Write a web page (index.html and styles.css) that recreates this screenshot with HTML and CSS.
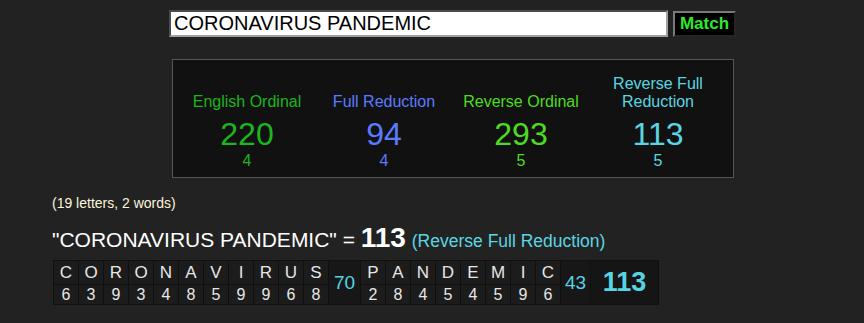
FILE: index.html
```html
<!DOCTYPE html>
<html lang="en">

<head>
    <meta charset="UTF-8">
    <meta name="viewport" content="width=device-width, initial-scale=1.0">
    <title>Gematria Calculator</title>
    <link rel="stylesheet" href="styles.css">
</head>

<body>
    <div class="top">
        <!-- Search bar -->
        <div class="search">
            <input class="query" type="text" value="CORONAVIRUS PANDEMIC">
            <button class="match-btn">Match</button>
        </div>

        <!-- Cipher summary -->
        <div class="ciphers">
            <div class="cipher english">
                <div class="cipher-name">English Ordinal</div>
                <div class="cipher-value">220</div>
                <div class="cipher-words">4</div>
            </div>
            <div class="cipher full">
                <div class="cipher-name">Full Reduction</div>
                <div class="cipher-value">94</div>
                <div class="cipher-words">4</div>
            </div>
            <div class="cipher reverse">
                <div class="cipher-name">Reverse Ordinal</div>
                <div class="cipher-value">293</div>
                <div class="cipher-words">5</div>
            </div>
            <div class="cipher reverse-full">
                <div class="cipher-name">Reverse Full Reduction</div>
                <div class="cipher-value">113</div>
                <div class="cipher-words">5</div>
            </div>
        </div>
    </div>

    <div class="count-note">(19 letters, 2 words)</div>

    <div class="equation">
        "CORONAVIRUS PANDEMIC" = <span class="equation-value">113</span> <span class="equation-cipher">(Reverse Full Reduction)</span>
    </div>

    <!-- Letter breakdown -->
    <div class="breakdown">
        <div class="letter">C</div><div class="num">6</div>
        <div class="letter">O</div><div class="num">3</div>
        <div class="letter">R</div><div class="num">9</div>
        <div class="letter">O</div><div class="num">3</div>
        <div class="letter">N</div><div class="num">4</div>
        <div class="letter">A</div><div class="num">8</div>
        <div class="letter">V</div><div class="num">5</div>
        <div class="letter">I</div><div class="num">9</div>
        <div class="letter">R</div><div class="num">9</div>
        <div class="letter">U</div><div class="num">6</div>
        <div class="letter">S</div><div class="num">8</div>
        <div class="word-total">70</div>
        <div class="letter">P</div><div class="num">2</div>
        <div class="letter">A</div><div class="num">8</div>
        <div class="letter">N</div><div class="num">4</div>
        <div class="letter">D</div><div class="num">5</div>
        <div class="letter">E</div><div class="num">4</div>
        <div class="letter">M</div><div class="num">5</div>
        <div class="letter">I</div><div class="num">9</div>
        <div class="letter">C</div><div class="num">6</div>
        <div class="word-total">43</div>
        <div class="grand-total">113</div>
    </div>
</body>

</html>
```

FILE: styles.css
```css
html,
body {
    overflow: hidden;
}

body {
    margin: 0;
    background: #222;
    font-family: "Liberation Sans", Arial, sans-serif;
    color: #eee;
}

.top {
    width: 905px;
    display: flex;
    flex-direction: column;
    align-items: center;
}

.search {
    display: flex;
    align-items: flex-start;
    gap: 5px;
    margin-top: 10px;
}

.query {
    width: 499px;
    height: 27px;
    box-sizing: border-box;
    border: 2px inset #a0a0a0;
    padding: 0 3px;
    background: #fff;
    color: #000;
    font-family: "Liberation Sans", Arial, sans-serif;
    font-size: 20px;
}

.match-btn {
    margin-top: 1px;
    width: 63px;
    height: 26px;
    box-sizing: border-box;
    padding: 0;
    border: 2px outset #7a7a7a;
    background: #000;
    color: #2ee82e;
    font-family: "Liberation Sans", Arial, sans-serif;
    font-size: 17px;
    font-weight: bold;
}

/* Cipher summary box */
.ciphers {
    margin-top: 22px;
    width: 562px;
    box-sizing: border-box;
    padding: 15px 6px 7px;
    border: 1px solid #555;
    background: #111;
    display: grid;
    grid-template-columns: repeat(4, 137px);
}

.cipher {
    display: flex;
    flex-direction: column;
    align-items: center;
    text-align: center;
}

.cipher-name {
    min-height: 36px;
    display: flex;
    align-items: flex-end;
    justify-content: center;
    font-size: 16px;
    line-height: 18px;
}

.cipher-value {
    margin-top: 5px;
    font-size: 32px;
    line-height: 36px;
}

.cipher-words {
    font-size: 16px;
    line-height: 18px;
}

.english {
    color: #1db51d;
}

.full {
    color: #5b7bff;
}

.reverse {
    color: #4fdb22;
}

.reverse-full {
    color: #5ad6e2;
}

.count-note {
    margin: 17px 0 0 52px;
    font-size: 14px;
    line-height: 16px;
    color: #fbf5dc;
}

.equation {
    margin: 17px 0 0 52px;
    font-size: 21px;
    line-height: 24px;
    color: #fff;
}

.equation-value {
    font-size: 28px;
    font-weight: bold;
    line-height: 20px;
}

.equation-cipher {
    font-size: 17.5px;
    color: #5ad6e2;
}

/* Letter breakdown table */
.breakdown {
    margin: 7px 0 0 53px;
    display: inline-grid;
    grid-auto-flow: column;
    grid-template-rows: 23px 19px;
    grid-template-columns: repeat(11, 24px) 31px repeat(8, 24px) 29px 67px;
    gap: 1px;
    padding: 1px;
    background: #101010;
}

.letter,
.num {
    display: flex;
    align-items: center;
    justify-content: center;
    background: #1c1c1c;
    color: #e6e6e6;
}

.letter {
    font-size: 17px;
}

.num {
    font-size: 16px;
}

.word-total,
.grand-total {
    grid-row: span 2;
    display: flex;
    align-items: center;
    justify-content: center;
    background: #171717;
    color: #55d4e2;
    font-size: 19px;
}

.grand-total {
    background: #151515;
    font-size: 27px;
    font-weight: bold;
}
```
